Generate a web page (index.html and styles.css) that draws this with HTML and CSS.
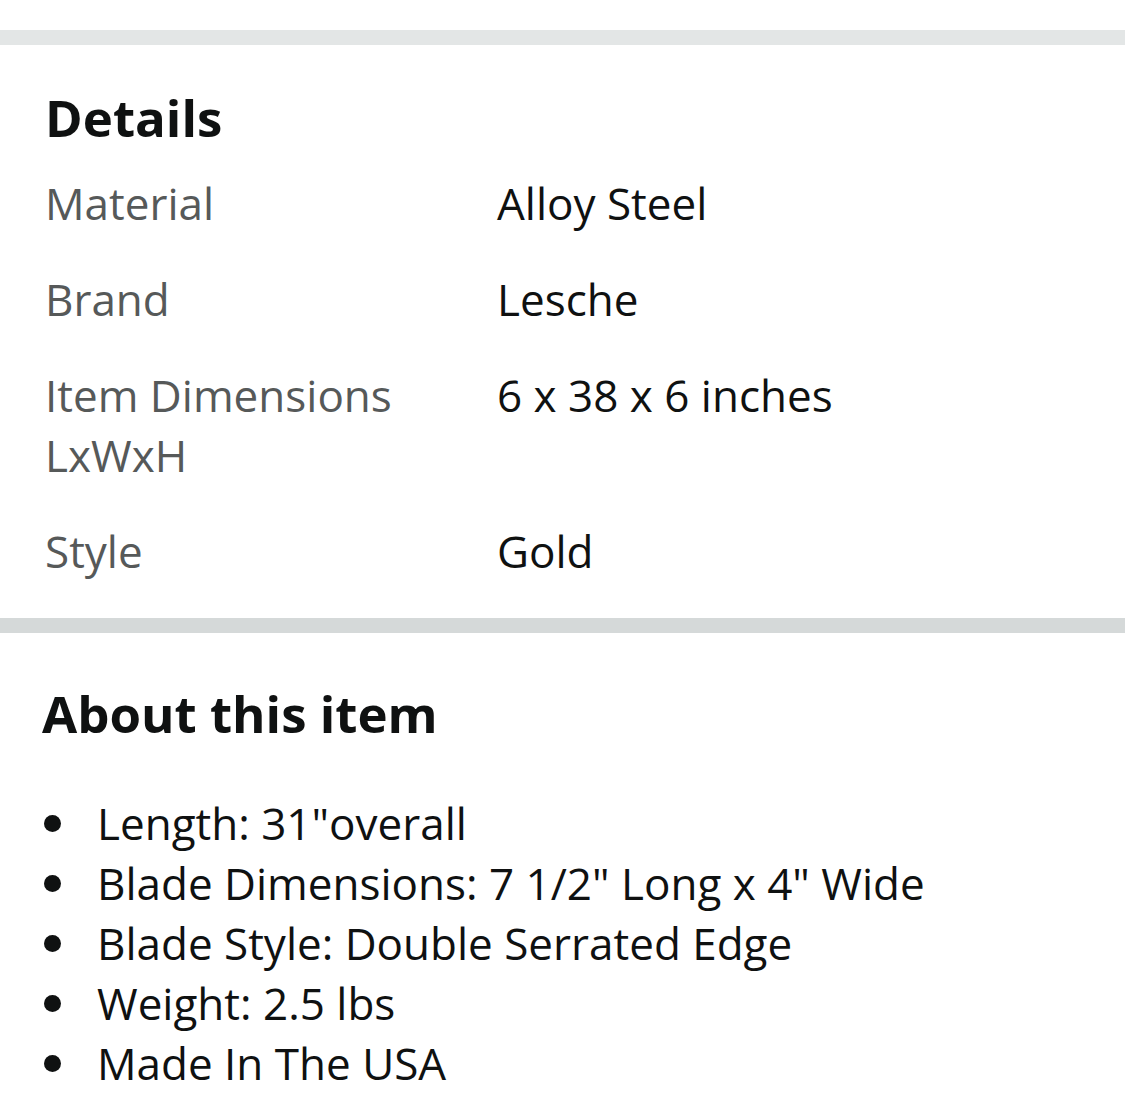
FILE: index.html
```html
<!DOCTYPE html>
<html>
<head>
<meta charset="utf-8">
<link rel="stylesheet" href="styles.css">
</head>
<body>
<div class="top-space"></div>
<div class="divider divider-light"></div>
<section class="details">
  <h2 class="heading">Details</h2>
  <div class="spec-table">
    <div class="spec-label">Material</div><div class="spec-value">Alloy Steel</div>
    <div class="spec-label">Brand</div><div class="spec-value">Lesche</div>
    <div class="spec-label">Item Dimensions LxWxH</div><div class="spec-value">6 x 38 x 6 inches</div>
    <div class="spec-label">Style</div><div class="spec-value">Gold</div>
  </div>
</section>
<div class="divider divider-dark"></div>
<section class="about">
  <h2 class="heading about-heading">About this item</h2>
  <ul class="bullets">
    <li>Length: 31"overall</li>
    <li>Blade Dimensions: 7 1/2" Long x 4" Wide</li>
    <li>Blade Style: Double Serrated Edge</li>
    <li>Weight: 2.5 lbs</li>
    <li>Made In The USA</li>
  </ul>
</section>
</body>
</html>
```

FILE: styles.css
```css
html, body {
  margin: 0;
  padding: 0;
  background: #ffffff;
}
body {
  font-family: "Open Sans", "Noto Sans", sans-serif;
  color: #0f1111;
  width: 1125px;
  overflow: hidden;
}
.top-space {
  height: 30px;
}
.divider {
  height: 15px;
}
.divider-light {
  background: #e3e6e6;
}
.divider-dark {
  background: #d5d9d9;
}
.details {
  padding: 40px 46px 37px 45px;
}
.heading {
  margin: 0;
  font-size: 51px;
  font-weight: 700;
  line-height: 64px;
  color: #0f1111;
}
.spec-table {
  margin-top: 24px;
  display: grid;
  grid-template-columns: 452px 1fr;
  row-gap: 36px;
  font-size: 44px;
  line-height: 60px;
}
.spec-label {
  color: #565959;
  width: 380px;
}
.spec-value {
  color: #0f1111;
}
.about {
  padding: 48px 43px 0 42px;
}
.bullets {
  margin: 48px 0 0 0;
  padding: 0;
  list-style: none;
  font-size: 44px;
  line-height: 60px;
}
.bullets li {
  display: flex;
  align-items: flex-start;
}
.bullets li::before {
  content: "";
  flex: 0 0 17px;
  height: 17px;
  margin: 22px 36px 0 2px;
  border-radius: 50%;
  background: #0f1111;
}
```
